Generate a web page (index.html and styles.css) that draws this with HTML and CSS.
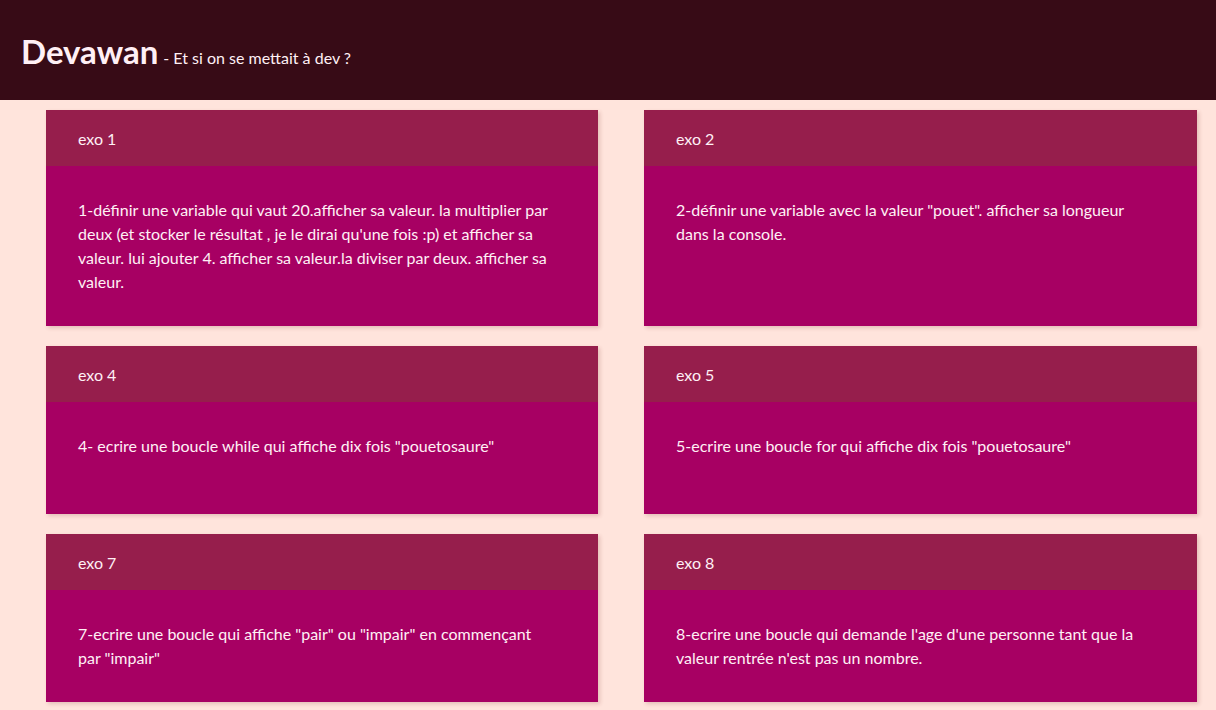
FILE: index.html
```html
<!DOCTYPE html>
<html lang="fr">
<head>
<meta charset="utf-8">
<title>Devawan</title>
<link rel="stylesheet" href="styles.css">
</head>
<body>
<header class="site-header">
  <h1 class="brand">Devawan</h1>
  <span class="tagline">- Et si on se mettait à dev ?</span>
</header>
<main class="grid">
  <section class="card">
    <div class="card-head">exo 1</div>
    <div class="card-body">1-définir une variable qui vaut 20.afficher sa valeur. la multiplier par deux (et stocker le résultat , je le dirai qu'une fois :p) et afficher sa valeur. lui ajouter 4. afficher sa valeur.la diviser par deux. afficher sa valeur.</div>
  </section>
  <section class="card">
    <div class="card-head">exo 2</div>
    <div class="card-body">2-définir une variable avec la valeur "pouet". afficher sa longueur dans la console.</div>
  </section>
  <section class="card">
    <div class="card-head">exo 4</div>
    <div class="card-body">4- ecrire une boucle while qui affiche dix fois "pouetosaure"</div>
  </section>
  <section class="card">
    <div class="card-head">exo 5</div>
    <div class="card-body">5-ecrire une boucle for qui affiche dix fois "pouetosaure"</div>
  </section>
  <section class="card">
    <div class="card-head">exo 7</div>
    <div class="card-body">7-ecrire une boucle qui affiche "pair" ou "impair" en commençant par "impair"</div>
  </section>
  <section class="card">
    <div class="card-head">exo 8</div>
    <div class="card-body">8-ecrire une boucle qui demande l'age d'une personne tant que la valeur rentrée n'est pas un nombre.</div>
  </section>
</main>
</body>
</html>
```
FILE: styles.css
```css
html, body {
  margin: 0;
  padding: 0;
}
body {
  background: #ffe4dc;
  font-family: "Lato", "Open Sans", sans-serif;
  color: #fff0f5;
}
.site-header {
  height: 100px;
  box-sizing: border-box;
  background: #370b16;
  display: flex;
  align-items: baseline;
  padding: 33px 0 0 21px;
}
.brand {
  margin: 0;
  font-size: 33px;
  font-weight: 700;
  line-height: 36px;
  color: #fff0f5;
}
.tagline {
  margin-left: 5px;
  font-size: 16px;
}
.grid {
  display: grid;
  grid-template-columns: 552px 553px;
  column-gap: 46px;
  row-gap: 20px;
  padding: 10px 0 20px 46px;
}
.card {
  display: flex;
  flex-direction: column;
  min-height: 168px;
  box-shadow: 2px 2px 4px rgba(120, 40, 40, 0.2);
}
.card-head {
  height: 56px;
  box-sizing: border-box;
  padding: 0 32px;
  display: flex;
  align-items: center;
  background: #961e4c;
  font-size: 16px;
}
.card-body {
  flex: 1;
  background: #a70063;
  padding: 32px 44px 32px 32px;
  font-size: 16px;
  line-height: 24px;
}
```
